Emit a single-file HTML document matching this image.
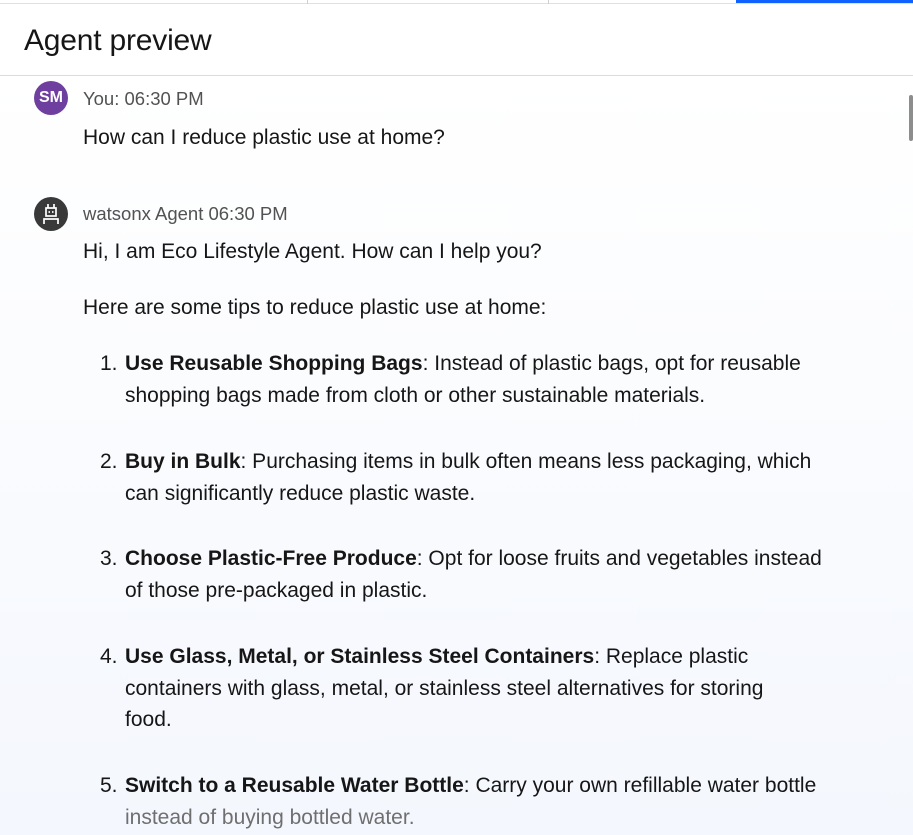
<!DOCTYPE html>
<html><head><meta charset="utf-8"><style>
*{margin:0;padding:0;box-sizing:border-box}
body{width:913px;height:835px;overflow:hidden;font-family:"Liberation Sans",sans-serif;color:#161616;background:#fff;position:relative}
.tabs{position:absolute;top:0;left:0;right:0;height:4px;border-bottom:1px solid #e0e0e0}
.tabs .d{position:absolute;top:0;width:1px;height:4px;background:#d0d0d0}
.tabs .b{position:absolute;top:0;left:736px;right:0;height:3px;background:#0f62fe}
.hdr{position:absolute;top:4px;left:0;right:0;height:72px;border-bottom:1px solid #dcdcdc;background:#fff}
.hdr h1{position:absolute;left:24px;top:20px;font-size:30px;font-weight:400;letter-spacing:-0.2px}
.main{position:absolute;top:76px;left:0;right:0;bottom:0;background:linear-gradient(#fff,#f4f7fd)}
.av{position:absolute;left:34px;width:34px;height:34px;border-radius:50%;color:#fff;font-weight:bold;font-size:16px;text-align:center;line-height:34px}
.meta{position:absolute;left:83px;font-size:18.5px;color:#525252}
.t{position:absolute;left:83px;font-size:21px;white-space:nowrap}
.li{position:absolute;left:100px;font-size:21px;line-height:31.5px;white-space:nowrap}
.li .n{position:absolute;left:0}
.li .c{margin-left:25px}
.sb{position:absolute;right:0;top:95px;width:4px;height:46px;background:#8d8d8d;border-radius:2px}
</style></head><body>
<div class="tabs"><div class="d" style="left:307px"></div><div class="d" style="left:548px"></div><div class="b"></div></div>
<div class="hdr"><h1>Agent preview</h1></div>
<div class="main"></div>
<div class="sb"></div>
<div class="av" style="top:81px;background:#6f3fa0">SM</div>
<div class="meta" style="top:88px">You: 06:30 PM</div>
<div class="t" style="top:126px">How can I reduce plastic use at home?</div>
<div class="av" style="top:197px;background:#393939">
<svg width="34" height="34" viewBox="0 0 34 34" fill="none" stroke="#fff" stroke-width="1.7"><path d="M14 7v4M20 7v4"/><rect x="12" y="11" width="10" height="8"/><path d="M14.5 15h1.5M18 15h1.5"/><path d="M10 27v-5h14v5"/></svg></div>
<div class="meta" style="top:203px">watsonx Agent 06:30 PM</div>
<div class="t" style="top:240px">Hi, I am Eco Lifestyle Agent. How can I help you?</div>
<div class="t" style="top:296px">Here are some tips to reduce plastic use at home:</div>
<div class="li" style="top:348px"><span class="n">1.</span><div class="c"><b>Use Reusable Shopping Bags</b>: Instead of plastic bags, opt for reusable<br>shopping bags made from cloth or other sustainable materials.</div></div>
<div class="li" style="top:446px"><span class="n">2.</span><div class="c"><b>Buy in Bulk</b>: Purchasing items in bulk often means less packaging, which<br>can significantly reduce plastic waste.</div></div>
<div class="li" style="top:543px"><span class="n">3.</span><div class="c"><b>Choose Plastic-Free Produce</b>: Opt for loose fruits and vegetables instead<br>of those pre-packaged in plastic.</div></div>
<div class="li" style="top:641px"><span class="n">4.</span><div class="c"><b>Use Glass, Metal, or Stainless Steel Containers</b>: Replace plastic<br>containers with glass, metal, or stainless steel alternatives for storing<br>food.</div></div>
<div class="li" style="top:770px"><span class="n">5.</span><div class="c"><b>Switch to a Reusable Water Bottle</b>: Carry your own refillable water bottle<br><span style="color:#6f6f6f">instead of buying bottled water.</span></div></div>
</body></html>
